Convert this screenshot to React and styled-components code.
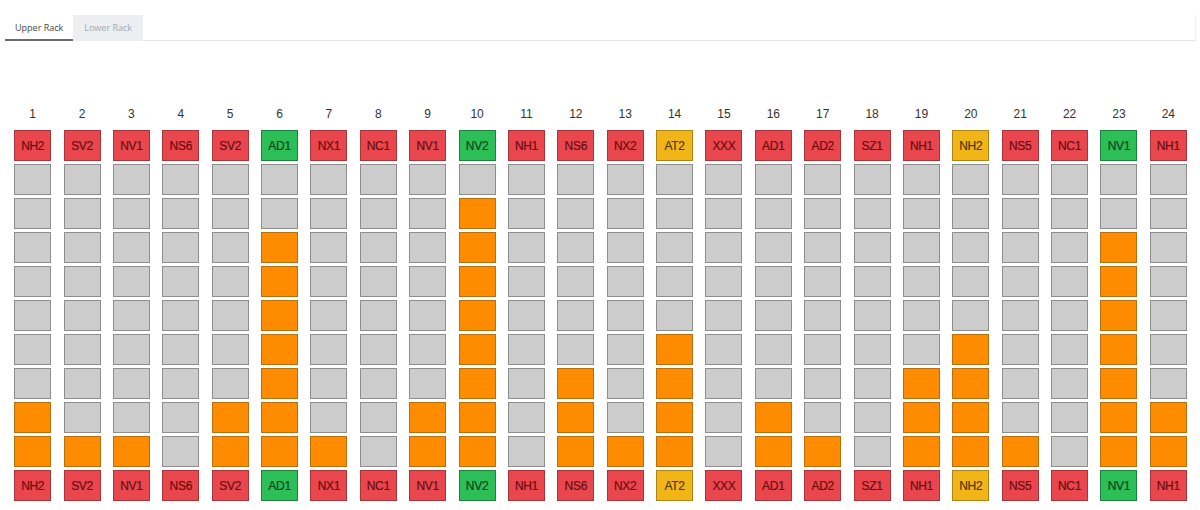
import styled, { createGlobalStyle } from "styled-components";

const GlobalStyle = createGlobalStyle`
  body {
    margin: 0;
    background: #ffffff;
    font-family: "Open Sans", "Liberation Sans", sans-serif;
  }
`;

const Page = styled.div`
  width: 1200px;
  height: 510px;
  padding: 15px 4px 0 5px;
  box-sizing: border-box;
`;

const TabBar = styled.div`
  display: flex;
  border-bottom: 1px solid #e4e6e8;
  border-right: 1px solid #f0f0f0;
`;

const Tab = styled.div`
  height: 26px;
  padding: 0 ${(p) => (p.$active ? "10px" : "11px")};
  display: flex;
  align-items: center;
  font-size: 9px;
  color: ${(p) => (p.$active ? "#4a4a4a" : "#a3a9b0")};
  background: ${(p) => (p.$active ? "transparent" : "#eceef1")};
  border-bottom: 2px solid ${(p) => (p.$active ? "#6b6b6b" : "transparent")};
  margin-bottom: -1px;
  box-sizing: border-box;
  min-width: 68px;
`;

const Rack = styled.div`
  display: flex;
  margin: 65px 3px 0 3px;
`;

const Column = styled.div`
  flex: 1;
  display: flex;
  flex-direction: column;
  align-items: center;
  gap: 3px;
`;

const SlotNumber = styled.div`
  height: 16px;
  line-height: 16px;
  font-family: "Liberation Sans", Arial, sans-serif;
  font-size: 12px;
  color: #333;
  margin-bottom: 5px;
`;

const tagColors = {
  red: { bg: "#e9474d", border: "#a8353a", text: "#6a0c10" },
  green: { bg: "#2dbf57", border: "#1f8140", text: "#0c441d" },
  amber: { bg: "#f2b517", border: "#b08316", text: "#4f3800" },
};

const Tag = styled.div`
  width: 37px;
  height: 31px;
  box-sizing: border-box;
  display: flex;
  align-items: center;
  justify-content: center;
  font-family: "Liberation Sans", Arial, sans-serif;
  font-size: 12px;
  letter-spacing: -0.3px;
  background: ${(p) => tagColors[p.$tone].bg};
  border: 1.5px solid ${(p) => tagColors[p.$tone].border};
  color: ${(p) => tagColors[p.$tone].text};
  -webkit-text-stroke: 0.2px ${(p) => tagColors[p.$tone].text};
`;

const Slot = styled.div`
  width: 37px;
  height: 31px;
  box-sizing: border-box;
  background: ${(p) => (p.$filled ? "#ff8c00" : "#cccccc")};
  border: 1.5px solid ${(p) => (p.$filled ? "#b7700f" : "#8e8e8e")};
`;

const LEVELS = 9;

const racks = [
  ["NH2", "red", 2],
  ["SV2", "red", 1],
  ["NV1", "red", 1],
  ["NS6", "red", 0],
  ["SV2", "red", 2],
  ["AD1", "green", 7],
  ["NX1", "red", 1],
  ["NC1", "red", 0],
  ["NV1", "red", 2],
  ["NV2", "green", 8],
  ["NH1", "red", 0],
  ["NS6", "red", 3],
  ["NX2", "red", 1],
  ["AT2", "amber", 4],
  ["XXX", "red", 0],
  ["AD1", "red", 2],
  ["AD2", "red", 1],
  ["SZ1", "red", 0],
  ["NH1", "red", 3],
  ["NH2", "amber", 4],
  ["NS5", "red", 1],
  ["NC1", "red", 0],
  ["NV1", "green", 7],
  ["NH1", "red", 2],
];

const App = () => {
  return (
    <>
      <GlobalStyle />
      <Page>
        <TabBar>
          <Tab $active>Upper Rack</Tab>
          <Tab>Lower Rack</Tab>
        </TabBar>
        <Rack>
          {racks.map(([code, tone, count], i) => (
            <Column key={i}>
              <SlotNumber>{i + 1}</SlotNumber>
              <Tag $tone={tone}>{code}</Tag>
              {Array.from({ length: LEVELS }).map((_, level) => (
                <Slot key={level} $filled={level >= LEVELS - count} />
              ))}
              <Tag $tone={tone}>{code}</Tag>
            </Column>
          ))}
        </Rack>
      </Page>
    </>
  );
};

export default App;
